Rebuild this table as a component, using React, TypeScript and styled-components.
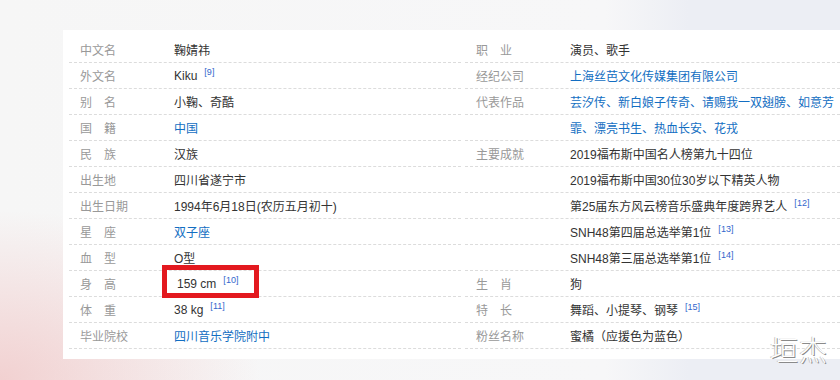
import React from 'react';
import styled, { createGlobalStyle } from 'styled-components';

const GlobalStyle = createGlobalStyle`
    html, body {
        margin: 0;
        padding: 0;
        overflow: hidden;
    }
    body {
        font-family: 'Liberation Sans', 'Noto Sans CJK SC', sans-serif;
    }
`;

const Page = styled.div`
    position: relative;
    width: 840px;
    height: 380px;
    padding: 30px 0 0 63px;
    box-sizing: border-box;
    background:
        radial-gradient(ellipse 260px 170px at 0% 100%, rgba(238, 178, 178, 0.55), transparent 100%),
        linear-gradient(90deg, #f6f6f6 0%, #f7f7f8 72%, #eceef4 82%, #eceef4 100%);
`;

const Panel = styled.div`
    display: grid;
    grid-template-columns: 392px 1fr;
    column-gap: 4px;
    height: 329px;
    box-sizing: border-box;
    padding: 7px 0 10px 6px;
    background: #fff;
`;

const Column = styled.div`
    display: flex;
    flex-direction: column;
`;

const Row = styled.div`
    display: flex;
    align-items: center;
    height: 26px;
    box-sizing: border-box;
    border-bottom: 1px dashed #dcdcdc;
    font-size: 12px;
    white-space: nowrap;
`;

const Label = styled.span<{ $spread?: boolean }>`
    width: 105px;
    padding-left: 11px;
    box-sizing: border-box;
    flex: none;
    color: #999;
    letter-spacing: ${(p) => (p.$spread ? '12px' : '0')};
`;

const Value = styled.span<{ $link?: boolean }>`
    position: relative;
    color: ${(p) => (p.$link ? '#136ec2' : '#333')};
`;

const Ref = styled.sup`
    margin-left: 7px;
    font-size: 9px;
    color: #3366cc;
    vertical-align: 5px;
    line-height: 0;
`;

const Marked = styled(Value)`
    padding-left: 3px;
`;

const Frame = styled.span`
    position: absolute;
    left: -12px;
    top: -12px;
    width: 97px;
    height: 33px;
    box-sizing: border-box;
    border: 5px solid #e3191f;
`;

const Watermark = styled.div`
    position: absolute;
    right: 12px;
    bottom: 17px;
    font-family: 'Noto Sans CJK SC', sans-serif;
    font-weight: 300;
    font-size: 28px;
    line-height: 1;
    letter-spacing: 1px;
    color: #fff;
    text-shadow: 1px 1px 0 #8a8a8a, -1px 0 0 #c8c8c8;
`;

type Item = {
    label?: string;
    value: string;
    link?: boolean;
    ref?: string;
    marked?: boolean;
};

const left: Item[] = [
    { label: '中文名', value: '鞠婧祎' },
    { label: '外文名', value: 'Kiku', ref: '9' },
    { label: '别名', value: '小鞠、奇酷' },
    { label: '国籍', value: '中国', link: true },
    { label: '民族', value: '汉族' },
    { label: '出生地', value: '四川省遂宁市' },
    { label: '出生日期', value: '1994年6月18日(农历五月初十)' },
    { label: '星座', value: '双子座', link: true },
    { label: '血型', value: 'O型' },
    { label: '身高', value: '159 cm', ref: '10', marked: true },
    { label: '体重', value: '38 kg', ref: '11' },
    { label: '毕业院校', value: '四川音乐学院附中', link: true },
];

const right: Item[] = [
    { label: '职业', value: '演员、歌手' },
    { label: '经纪公司', value: '上海丝芭文化传媒集团有限公司', link: true },
    { label: '代表作品', value: '芸汐传、新白娘子传奇、请赐我一双翅膀、如意芳', link: true },
    { value: '霏、漂亮书生、热血长安、花戎', link: true },
    { label: '主要成就', value: '2019福布斯中国名人榜第九十四位' },
    { value: '2019福布斯中国30位30岁以下精英人物' },
    { value: '第25届东方风云榜音乐盛典年度跨界艺人', ref: '12' },
    { value: 'SNH48第四届总选举第1位', ref: '13' },
    { value: 'SNH48第三届总选举第1位', ref: '14' },
    { label: '生肖', value: '狗' },
    { label: '特长', value: '舞蹈、小提琴、钢琴', ref: '15' },
    { label: '粉丝名称', value: '蜜橘（应援色为蓝色）' },
];

function InfoRow({ item }: { item: Item }) {
    const label = item.label || '';
    const ValueTag = item.marked ? Marked : Value;
    return (
        <Row>
            <Label $spread={label.length === 2}>{label}</Label>
            <ValueTag $link={item.link}>
                {item.marked && <Frame />}
                {item.value}
                {item.ref && <Ref>[{item.ref}]</Ref>}
            </ValueTag>
        </Row>
    );
}

export default function App() {
    return (
        <Page>
            <GlobalStyle />
            <Panel>
                <Column>
                    {left.map((item) => (
                        <InfoRow key={item.label} item={item} />
                    ))}
                </Column>
                <Column>
                    {right.map((item, i) => (
                        <InfoRow key={i} item={item} />
                    ))}
                </Column>
            </Panel>
            <Watermark>垣杰</Watermark>
        </Page>
    );
}
